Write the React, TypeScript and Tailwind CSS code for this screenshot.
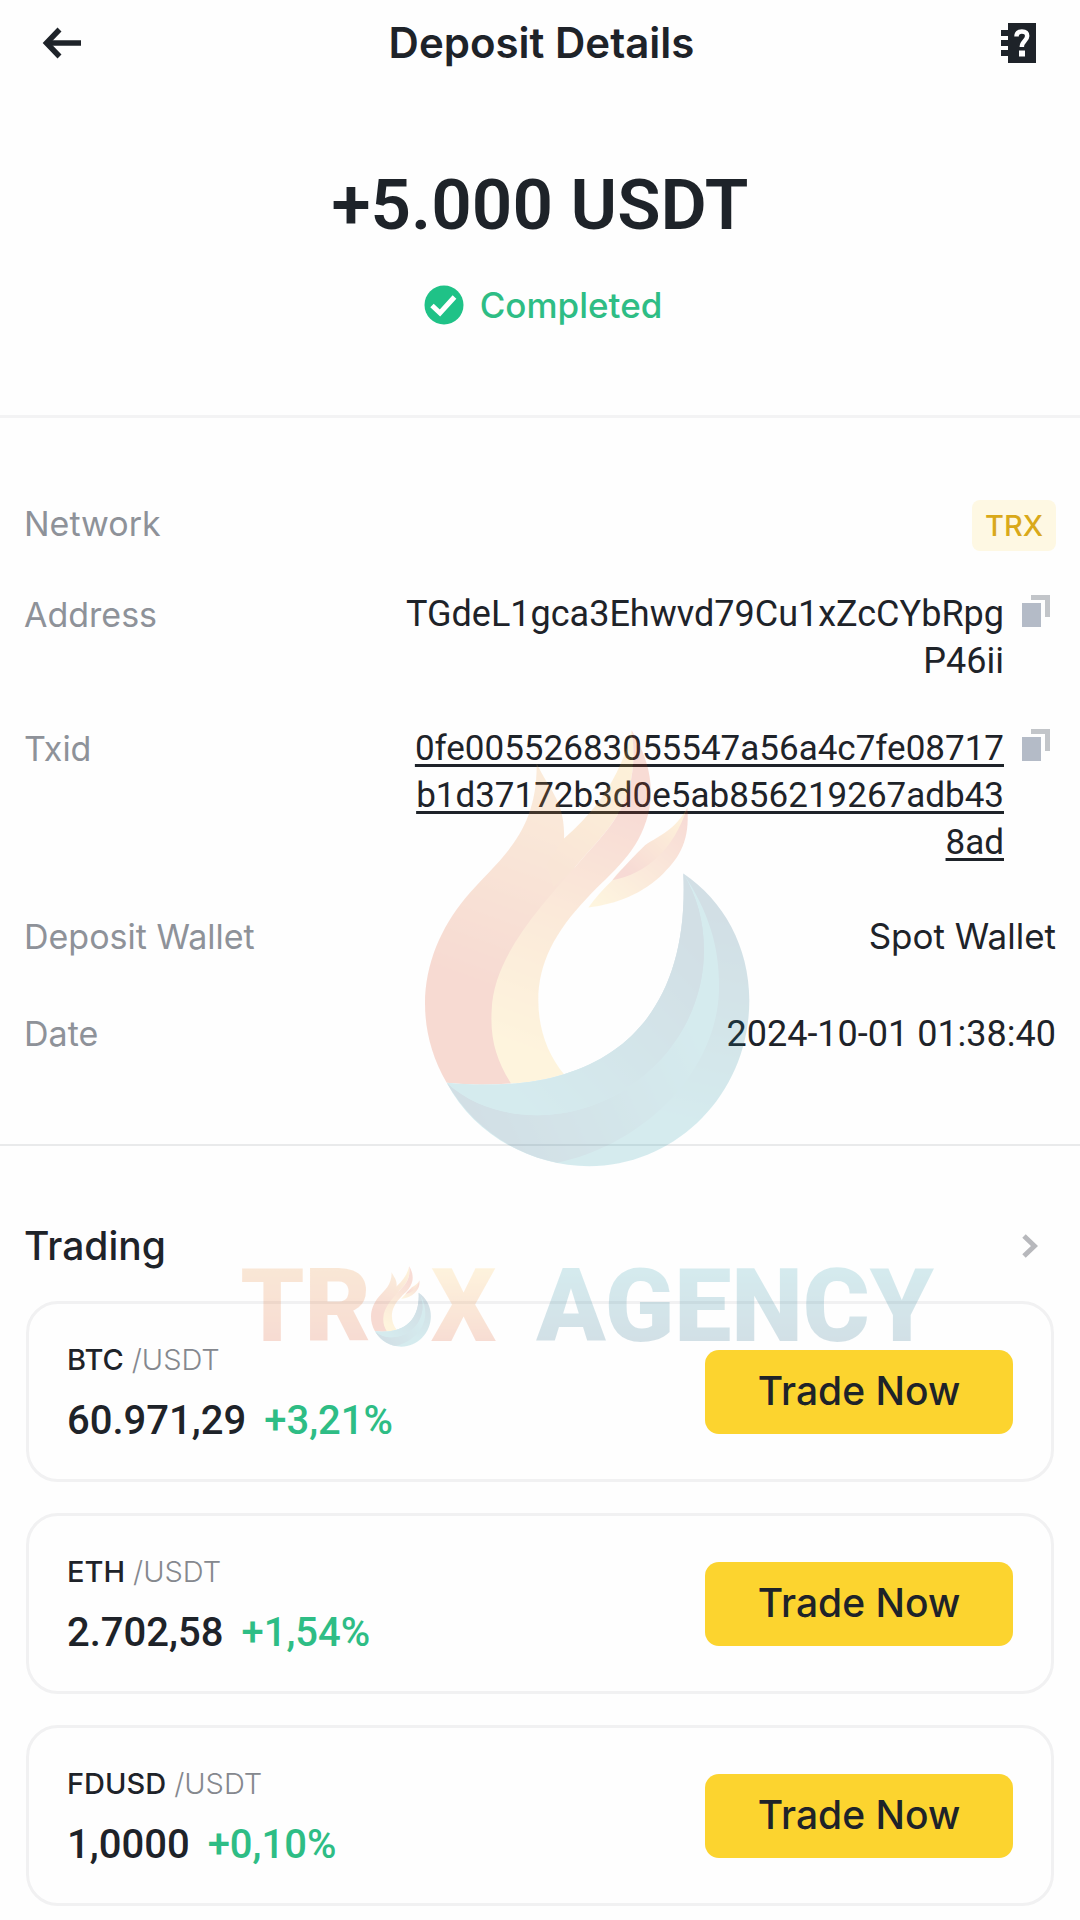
import React from 'react';

type Pair = {
  base: string;
  quote: string;
  price: string;
  change: string;
};

const pairs: Pair[] = [
  { base: 'BTC', quote: 'USDT', price: '60.971,29', change: '+3,21%' },
  { base: 'ETH', quote: 'USDT', price: '2.702,58', change: '+1,54%' },
  { base: 'FDUSD', quote: 'USDT', price: '1,0000', change: '+0,10%' },
];

function BackIcon() {
  return (
    <svg className="w-10 h-8" viewBox="0 0 40 32" fill="none" stroke="currentColor" strokeWidth={5.5}>
      <path d="M39 16H5" />
      <path d="M17.500 2.500L4.500 16l13 13.500" />
    </svg>
  );
}

function GuideIcon() {
  return (
    <svg className="w-9 h-10" viewBox="0 0 36 40" fill="none">
      <path d="M7 0h28v40H7v-7H0v-6h7v-4H0v-6h7v-4H0V7h7z" fill="currentColor" />
      <path d="M15.500 13.500c0-3.600 2.300-5 5.400-5 3.400 0 5.300 1.800 5.300 4.600 0 4.700-5.400 4.800-5.400 11" stroke="#fff" strokeWidth={4.5} />
      <path d="M18 27.500h6v6h-6z" fill="#fff" />
    </svg>
  );
}

function CheckIcon() {
  return (
    <svg className="w-10 h-10" viewBox="0 0 40 40" fill="none">
      <circle cx="20" cy="20" r="19.500" fill="#1fc287" />
      <path d="M8 20.500l8 7.500 14.500-16" stroke="#fff" strokeWidth={5} />
    </svg>
  );
}

function CopyIcon() {
  return (
    <svg className="w-7 h-8" viewBox="0 0 28 32">
      <path d="M0 8h19v24H0z" fill="#b4bbc7" />
      <path d="M9 0h19v22h-5V5H9z" fill="#c2c5c9" />
    </svg>
  );
}

function Flame({ id, className }: { id: string; className: string }) {
  return (
    <svg className={className} viewBox="75 0 975 1310" fill="none">
      <defs>
        <linearGradient id={`${id}-left`} x1="440" y1="100" x2="200" y2="760" gradientUnits="userSpaceOnUse">
          <stop offset="0" stopColor="#f0a040" />
          <stop offset="1" stopColor="#d83c10" />
        </linearGradient>
        <linearGradient id={`${id}-tip`} x1="690" y1="60" x2="480" y2="420" gradientUnits="userSpaceOnUse">
          <stop offset="0" stopColor="#ffc23c" />
          <stop offset="1" stopColor="#e67828" />
        </linearGradient>
        <linearGradient id={`${id}-band`} x1="640" y1="250" x2="370" y2="960" gradientUnits="userSpaceOnUse">
          <stop offset="0" stopColor="#e04a24" />
          <stop offset="0.450" stopColor="#f09038" />
          <stop offset="1" stopColor="#ffca4d" />
        </linearGradient>
        <linearGradient id={`${id}-leaf`} x1="850" y1="260" x2="600" y2="540" gradientUnits="userSpaceOnUse">
          <stop offset="0" stopColor="#dc4424" />
          <stop offset="1" stopColor="#ffd25a" />
        </linearGradient>
        <linearGradient id={`${id}-leaf-in`} x1="830" y1="260" x2="680" y2="430" gradientUnits="userSpaceOnUse">
          <stop offset="0" stopColor="#ffb83c" />
          <stop offset="1" stopColor="#d83c20" />
        </linearGradient>
        <linearGradient id={`${id}-water`} x1="1000" y1="560" x2="860" y2="1200" gradientUnits="userSpaceOnUse">
          <stop offset="0" stopColor="#10587a" />
          <stop offset="0.500" stopColor="#18788f" />
          <stop offset="1" stopColor="#219bac" />
        </linearGradient>
        <linearGradient id={`${id}-deep`} x1="230" y1="1180" x2="900" y2="860" gradientUnits="userSpaceOnUse">
          <stop offset="0" stopColor="#10587a" />
          <stop offset="1" stopColor="#219bac" />
        </linearGradient>
        <linearGradient id={`${id}-crest`} x1="860" y1="620" x2="330" y2="1120" gradientUnits="userSpaceOnUse">
          <stop offset="0" stopColor="#10587a" />
          <stop offset="1" stopColor="#219bac" />
        </linearGradient>
      </defs>
      <path
        d="M410 100C445 175 497 215 492 325L530 400L400 700L333 1060Q240 1068 140 1058C95 980 75 900 75 820C75 700 125 590 195 505C290 390 412 320 410 100Z"
        fill={`url(#${id}-left)`}
      />
      <path d="M695 0C725 220 620 300 530 405L460 470L440 400L492 325C600 230 665 130 695 0Z" fill={`url(#${id}-tip)`} />
      <path
        d="M695 0C745 80 765 170 745 250C715 370 640 420 560 505C465 605 415 700 415 810C415 900 445 975 492 1032Q420 1055 333 1060C290 990 270 930 275 840C280 680 420 530 530 405C620 300 725 220 695 0Z"
        fill={`url(#${id}-band)`}
      />
      <path d="M862 232C870 330 840 380 790 430C730 490 650 522 565 532Q595 490 637 450C700 360 820 340 862 232Z" fill={`url(#${id}-leaf)`} />
      <path d="M862 232C825 300 780 315 735 345Q690 388 637 450C740 430 820 360 862 232Z" fill={`url(#${id}-leaf-in)`} />
      <path
        d="M850 430C970 510 1048 650 1048 810C1048 1090 830 1308 567 1308C390 1308 220 1210 141 1059C270 1070 400 1062 492 1032C730 960 865 760 850 430Z"
        fill={`url(#${id}-water)`}
      />
      <path
        d="M850 430C930 550 960 660 957 780C950 1020 740 1240 472 1298C330 1270 210 1180 140 1058C220 1130 320 1155 412 1155C680 1155 912 930 912 660C912 570 890 500 850 430Z"
        fill={`url(#${id}-deep)`}
      />
      <path
        d="M850 430C890 500 912 570 912 660C912 930 680 1155 412 1155C320 1155 220 1130 140 1058C270 1070 400 1062 492 1032C730 960 865 760 850 430Z"
        fill={`url(#${id}-crest)`}
      />
    </svg>
  );
}

function Watermark() {
  return (
    <div className="pointer-events-none absolute inset-x-0 top-[730px] flex flex-col items-center gap-[98px] pl-[94px] opacity-[0.18]" aria-hidden="true">
      <Flame id="mark" className="w-[325px] h-[437px]" />
      <div className="flex items-end font-[Roboto,sans-serif] text-[102px] font-black leading-[82px]">
        <span className="bg-linear-to-b from-[#e98526] to-[#d83c10] bg-clip-text text-transparent">TR</span>
        <Flame id="letter" className="w-[60px] h-[81px]" />
        <span className="bg-linear-to-b from-[#ffc84d] to-[#d83c10] bg-clip-text text-transparent">X</span>
        <span className="ml-10 bg-linear-to-b from-[#219bac] to-[#10587a] bg-clip-text text-transparent">AGENCY</span>
      </div>
    </div>
  );
}

function DetailRow({ label, children }: { label: string; children: React.ReactNode }) {
  return (
    <div className="flex items-start justify-between text-[35px] leading-[47px]">
      <dt className="text-[34px] text-[#8e9299]">{label}</dt>
      <dd className="text-right">{children}</dd>
    </div>
  );
}

function CopyButton({ label }: { label: string }) {
  return (
    <button type="button" aria-label={label} className="mt-1 mr-[6px] shrink-0 self-start">
      <CopyIcon />
    </button>
  );
}

function PairCard({ pair }: { pair: Pair }) {
  return (
    <li className="flex items-center justify-between rounded-[32px] border-3 border-[#f1f1f2] px-[38px] py-[35px]">
      <div className="pt-[7px]">
        <div className="flex gap-2 text-[29px] leading-[28px]">
          <span className="font-medium">{pair.base}</span>
          <span className="font-light text-[#85888e]">/{pair.quote}</span>
        </div>
        <div className="mt-6 flex gap-[18px] font-[Roboto,sans-serif] text-[40px] font-medium leading-[46px]">
          <span>{pair.price}</span>
          <span className="text-[#2ebd85]">{pair.change}</span>
        </div>
      </div>
      <button type="button" className="h-[84px] w-[308px] rounded-[14px] bg-[#fcd42f] text-[39px] font-medium">
        Trade Now
      </button>
    </li>
  );
}

export default function App() {
  return (
    <main className="relative min-h-screen overflow-hidden bg-[#fefefe] font-[Inter,sans-serif] text-[#1e2329]">
      <header className="flex items-center justify-between pt-[22px] pr-[43px] pl-[42px]">
        <button type="button" aria-label="Back">
          <BackIcon />
        </button>
        <h1 className="text-[42px] font-semibold leading-[42px]">Deposit Details</h1>
        <button type="button" aria-label="Help">
          <GuideIcon />
        </button>
      </header>

      <section className="flex flex-col items-center border-b-3 border-[#f3f3f4] pt-[105px] pb-[89px]">
        <p className="font-[Roboto,sans-serif] text-[71px] font-semibold leading-[72px]">+5.000 USDT</p>
        <p className="mt-[43px] flex items-center gap-4 pl-[6px] text-[35px] font-medium leading-[42px] text-[#2ebd85]">
          <CheckIcon />
          Completed
        </p>
      </section>

      <dl className="flex flex-col border-b-2 border-[#e9eaeb] px-6 pt-[82px] pb-[86px]">
        <DetailRow label="Network">
          <span className="block rounded-lg bg-[#fef8e3] px-[13px] text-[29px] leading-[51px] font-medium text-[#d9a91a]">TRX</span>
        </DetailRow>
        <div className="mt-10">
          <DetailRow label="Address">
            <div className="flex gap-[18px]">
              <span className="font-[Roboto,sans-serif] text-[36px]">
                TGdeL1gca3Ehwvd79Cu1xZcCYbRpg
                <br />
                P46ii
              </span>
              <CopyButton label="Copy address" />
            </div>
          </DetailRow>
        </div>
        <div className="mt-10">
          <DetailRow label="Txid">
            <div className="flex gap-[18px]">
              <a href="#txid" className="font-[Roboto,sans-serif] underline decoration-3 underline-offset-4">
                0fe00552683055547a56a4c7fe08717
                <br />
                b1d37172b3d0e5ab856219267adb43
                <br />
                8ad
              </a>
              <CopyButton label="Copy txid" />
            </div>
          </DetailRow>
        </div>
        <div className="mt-[47px]">
          <DetailRow label="Deposit Wallet">Spot Wallet</DetailRow>
        </div>
        <div className="mt-[50px]">
          <DetailRow label="Date">
            <span className="font-[Roboto,sans-serif] text-[36px]">2024-10-01 01:38:40</span>
          </DetailRow>
        </div>
      </dl>

      <section className="px-6 pt-[75px] pb-3">
        <div className="flex items-center justify-between pr-[18px]">
          <h2 className="text-[39px] font-medium leading-[50px]">Trading</h2>
          <a href="#trading" aria-label="All trading pairs">
            <svg className="w-4 h-6" viewBox="0 0 16 24" fill="none">
              <path d="M2 2l10.500 10L2 22" stroke="#b7b8bc" strokeWidth={5} />
            </svg>
          </a>
        </div>
        <ul className="mt-[30px] flex flex-col gap-[31px] px-[2px]">
          {pairs.map((pair) => (
            <PairCard key={pair.base} pair={pair} />
          ))}
        </ul>
      </section>

      <Watermark />
    </main>
  );
}
